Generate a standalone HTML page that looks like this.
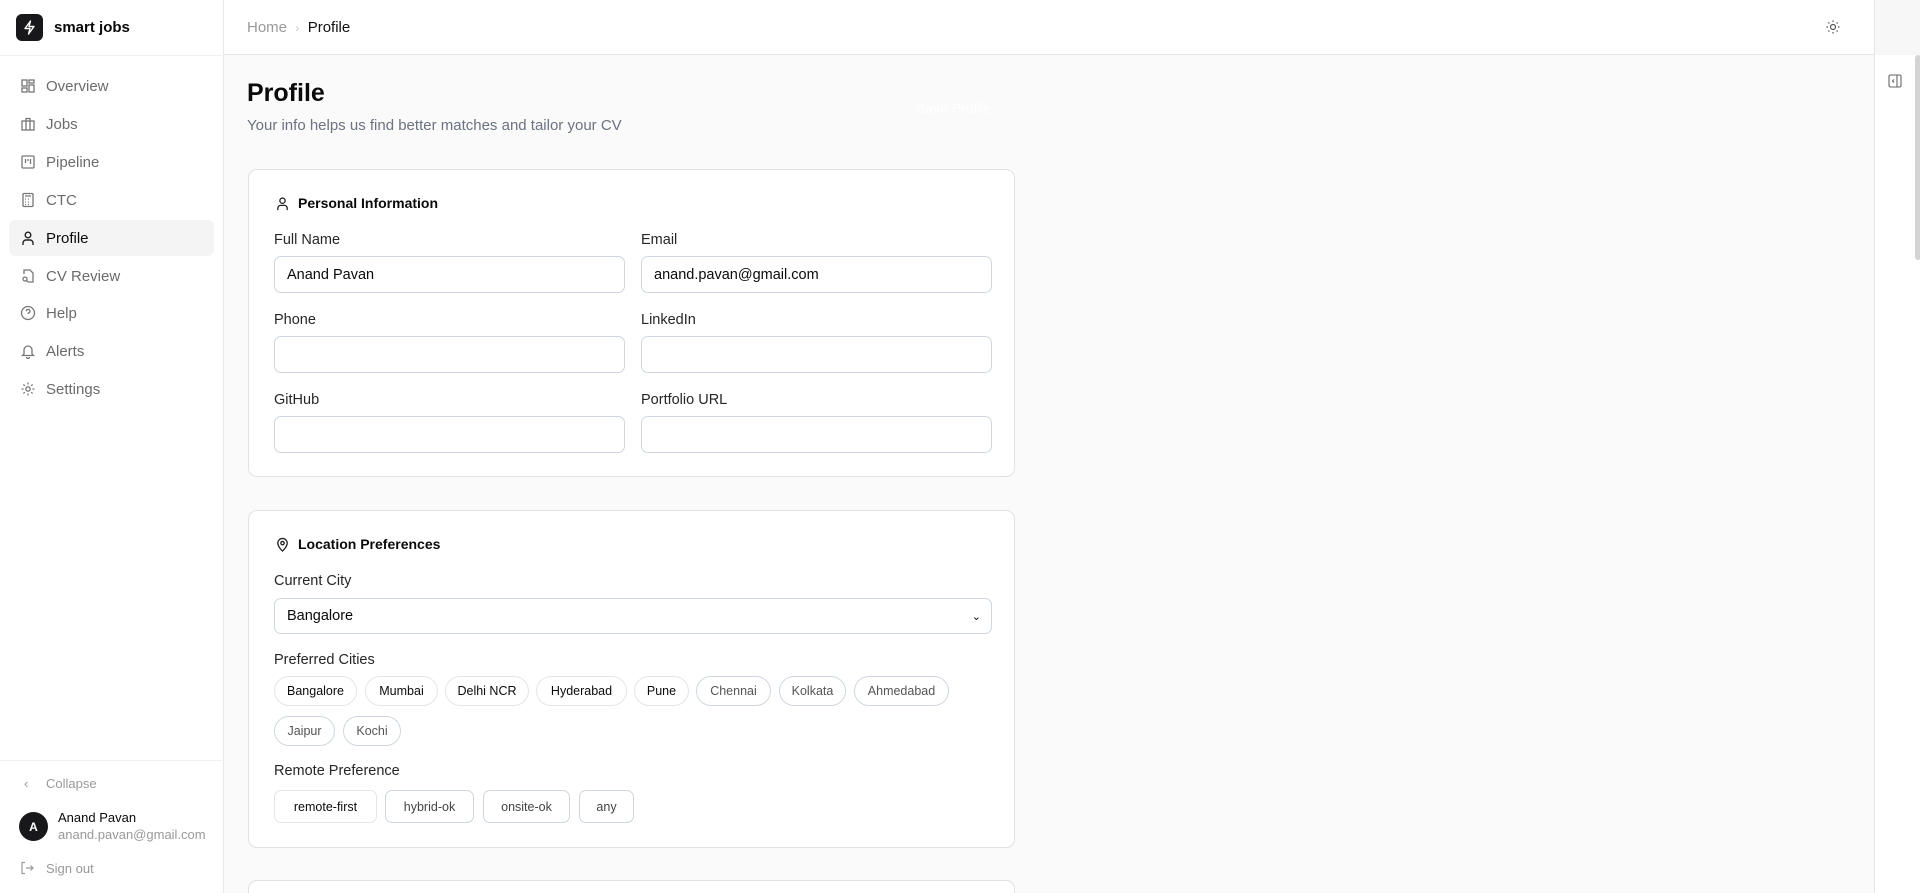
<!DOCTYPE html>
<html style="overflow:hidden;height:893px"><head><meta charset="utf-8"><style>
*{box-sizing:border-box;margin:0;padding:0}
html,body{width:1920px;height:893px;overflow:hidden}
body{font-family:"Liberation Sans",sans-serif;background:#fafafa;color:#0a0a0a;position:relative}
.sb{position:absolute;left:0;top:0;width:224px;height:893px;background:#fff;border-right:1px solid #e8e8e8}
.logo{position:absolute;left:16px;top:14px;width:27px;height:27px;border-radius:6px;background:#18181b}
.brand{position:absolute;left:54px;top:19px;font-size:15px;font-weight:bold}
.sbline{position:absolute;left:0;width:224px;height:1px;background:#f0f0f0}
.nav{position:absolute;left:9px;width:205px;height:36px;border-radius:6px;display:flex;align-items:center;font-size:15px;color:#6b6b6b}
.nav svg{position:absolute;left:11px}
.nav span{position:absolute;left:37px}
.nav.act{background:#f4f4f5;color:#0a0a0a;font-weight:500}
.hdr{position:absolute;left:224px;top:0;width:1650px;height:55px;background:#fff;border-bottom:1px solid #e5e5e5}
.rp{position:absolute;left:1874px;top:0;width:46px;height:893px;background:#fff;border-left:1px solid #e5e5e5}
.card{position:absolute;left:248px;width:767px;background:#fff;border:1px solid #e2e2e2;border-radius:9px}
.ch{position:absolute;left:26px;font-size:14px;font-weight:bold;display:flex;align-items:center;gap:8px}
.lbl{position:absolute;font-size:14.5px;color:#262626}
.inp{position:absolute;height:37px;border:1px solid #cfd6e0;border-radius:7px;background:#fff;font-size:14.5px;padding:0 12px;display:flex;align-items:center}
.chip{position:absolute;height:30px;border-radius:15px;font-size:12.5px;display:flex;align-items:center;justify-content:center;border:1px solid #cfd6e0;color:#555}
.chip.s{border-color:#e5e5e5;color:#0a0a0a}
.btn{position:absolute;height:33px;border-radius:7px;font-size:12.5px;display:flex;align-items:center;justify-content:center;border:1px solid #cfd6e0;color:#444}
</style></head><body>
<div class="sb">
 <div class="logo"><svg width="27" height="27" viewBox="0 0 27 27"><path d="M14.5 7 9 14.5h5l-1.5 5.5 5.5-7.5h-5z" fill="none" stroke="#fff" stroke-width="1.4" stroke-linejoin="round"/></svg></div>
 <div class="brand">smart jobs</div>
 <div class="sbline" style="top:55px"></div>
 <div class="nav" style="top:68px"><svg width="16" height="16" viewBox="0 0 16 16" fill="none" stroke="#777" stroke-width="1.3"><rect x="2" y="2" width="5" height="6"/><rect x="9" y="2" width="5" height="3"/><rect x="9" y="7" width="5" height="7"/><rect x="2" y="10" width="5" height="4"/></svg><span>Overview</span></div>
 <div class="nav" style="top:106px"><svg width="16" height="16" viewBox="0 0 16 16" fill="none" stroke="#777" stroke-width="1.3"><rect x="2" y="5" width="12" height="9"/><path d="M6 5V2.5h4V5M6 5v9M10 5v9"/></svg><span>Jobs</span></div>
 <div class="nav" style="top:144px"><svg width="16" height="16" viewBox="0 0 16 16" fill="none" stroke="#777" stroke-width="1.3"><rect x="2" y="2" width="12" height="12" rx="1"/><path d="M5.5 5v4M8 5v2M10.5 5v5"/></svg><span>Pipeline</span></div>
 <div class="nav" style="top:182px"><svg width="16" height="16" viewBox="0 0 16 16" fill="none" stroke="#777" stroke-width="1.3"><rect x="3" y="1.5" width="10" height="13" rx="1"/><path d="M5 4h6M5 7h1M8 7h1M5 10h1M8 10h1M5 12.5h1M8 12.5h1"/></svg><span>CTC</span></div>
 <div class="nav act" style="top:220px"><svg width="16" height="16" viewBox="0 0 16 16" fill="none" stroke="#222" stroke-width="1.4"><circle cx="8" cy="5" r="2.8"/><path d="M3 15v-2a3 3 0 0 1 3-3h4a3 3 0 0 1 3 3v2"/></svg><span>Profile</span></div>
 <div class="nav" style="top:258px"><svg width="16" height="16" viewBox="0 0 16 16" fill="none" stroke="#777" stroke-width="1.3"><path d="M4 6V2h6l3 3v9H8"/><circle cx="5" cy="11" r="2"/><path d="M6.5 12.5 8 14"/></svg><span>CV Review</span></div>
 <div class="nav" style="top:295px"><svg width="16" height="16" viewBox="0 0 16 16" fill="none" stroke="#777" stroke-width="1.3"><circle cx="8" cy="8" r="6.5"/><path d="M6.3 6.2a1.8 1.8 0 1 1 2.3 1.7c-.5.2-.6.6-.6 1.1M8 11v.3"/></svg><span>Help</span></div>
 <div class="nav" style="top:333px"><svg width="16" height="16" viewBox="0 0 16 16" fill="none" stroke="#777" stroke-width="1.3"><path d="M4 11V7a4 4 0 0 1 8 0v4l1.5 1.5h-11zM6.5 14a1.5 1.5 0 0 0 3 0"/></svg><span>Alerts</span></div>
 <div class="nav" style="top:371px"><svg width="16" height="16" viewBox="0 0 16 16" fill="none" stroke="#777" stroke-width="1.3"><circle cx="8" cy="8" r="2.2"/><path d="M8 1.5v2M8 12.5v2M1.5 8h2M12.5 8h2M3.4 3.4l1.4 1.4M11.2 11.2l1.4 1.4M3.4 12.6l1.4-1.4M11.2 4.8l1.4-1.4"/></svg><span>Settings</span></div>
 <div class="sbline" style="top:760px"></div>
 <div style="position:absolute;left:24px;top:776px;font-size:13px;color:#999">‹</div>
 <div style="position:absolute;left:46px;top:776px;font-size:13px;color:#999">Collapse</div>
 <div style="position:absolute;left:19px;top:812px;width:29px;height:29px;border-radius:50%;background:#18181b;color:#fff;font-size:12px;font-weight:bold;display:flex;align-items:center;justify-content:center">A</div>
 <div style="position:absolute;left:58px;top:810px;font-size:13px;font-weight:500">Anand Pavan</div>
 <div style="position:absolute;left:58px;top:827px;font-size:13px;color:#999">anand.pavan@gmail.com</div>
 <svg style="position:absolute;left:20px;top:861px" width="14" height="14" viewBox="0 0 14 14" fill="none" stroke="#999" stroke-width="1.2"><path d="M5 1.5H2v11h3M6 7h7M10.5 4.5 13 7l-2.5 2.5"/></svg>
 <div style="position:absolute;left:46px;top:861px;font-size:13px;color:#999">Sign out</div>
</div>
<div class="hdr">
 <div style="position:absolute;left:23px;top:19px;font-size:15px;color:#999">Home&nbsp;&nbsp;<span style="color:#ccc;font-size:12px">›</span>&nbsp;&nbsp;<span style="color:#111">Profile</span></div>
 <svg style="position:absolute;left:1601px;top:19px" width="16" height="16" viewBox="0 0 16 16" fill="none" stroke="#555" stroke-width="1.2"><circle cx="8" cy="8" r="2.5"/><path d="M8 1.5v1.5M8 13v1.5M1.5 8H3M13 8h1.5M3.4 3.4l1 1M11.6 11.6l1 1M3.4 12.6l1-1M11.6 4.4l1-1"/></svg>
</div>
<div class="rp">
 <div style="position:absolute;left:0;top:0;width:46px;height:55px;background:#f7f7f7"></div>
 <svg style="position:absolute;left:13px;top:74px" width="14" height="14" viewBox="0 0 14 14" fill="none" stroke="#666" stroke-width="1.1"><rect x="1" y="1" width="12" height="12" rx="1.5"/><path d="M9 1v12M6 5.5 4.5 7 6 8.5"/></svg>
 <div style="position:absolute;left:40px;top:55px;width:6px;height:205px;background:#d4d4d4;border-radius:3px"></div>
</div>
<div style="position:absolute;left:247px;top:79px;font-size:25px;font-weight:bold">Profile</div>
<div style="position:absolute;left:247px;top:117px;font-size:15px;color:#6b7280">Your info helps us find better matches and tailor your CV</div>
<div style="position:absolute;left:916px;top:100px;font-size:14px;color:#fff">Save Profile</div>

<div class="card" style="top:169px;height:308px">
 <div class="ch" style="top:25px"><svg width="15" height="15" viewBox="0 0 16 16" fill="none" stroke="#222" stroke-width="1.4"><circle cx="8" cy="5" r="2.8"/><path d="M3 15v-2a3 3 0 0 1 3-3h4a3 3 0 0 1 3 3v2"/></svg>Personal Information</div>
 <div class="lbl" style="left:25px;top:62px">Full Name</div><div class="lbl" style="left:392px;top:62px">Email</div>
 <div class="inp" style="left:25px;top:86px;width:351px">Anand Pavan</div>
 <div class="inp" style="left:392px;top:86px;width:351px">anand.pavan@gmail.com</div>
 <div class="lbl" style="left:25px;top:142px">Phone</div><div class="lbl" style="left:392px;top:142px">LinkedIn</div>
 <div class="inp" style="left:25px;top:166px;width:351px"></div>
 <div class="inp" style="left:392px;top:166px;width:351px"></div>
 <div class="lbl" style="left:25px;top:222px">GitHub</div><div class="lbl" style="left:392px;top:222px">Portfolio URL</div>
 <div class="inp" style="left:25px;top:246px;width:351px"></div>
 <div class="inp" style="left:392px;top:246px;width:351px"></div>
</div>

<div class="card" style="top:510px;height:338px">
 <div class="ch" style="top:25px"><svg width="15" height="15" viewBox="0 0 16 16" fill="none" stroke="#222" stroke-width="1.4"><path d="M8 15s5-4.5 5-8.5a5 5 0 0 0-10 0C3 10.5 8 15 8 15z"/><circle cx="8" cy="6.5" r="1.8"/></svg>Location Preferences</div>
 <div class="lbl" style="left:25px;top:62px">Current City</div>
 <div class="inp" style="left:25px;top:87px;width:718px;height:36px">Bangalore<span style="position:absolute;right:10px;font-size:11px">&#8964;</span></div>
 <div class="lbl" style="left:25px;top:141px">Preferred Cities</div>
 <div class="chip s" style="left:25px;top:165px;width:83px">Bangalore</div>
 <div class="chip s" style="left:116px;top:165px;width:73px">Mumbai</div>
 <div class="chip s" style="left:196px;top:165px;width:84px">Delhi NCR</div>
 <div class="chip s" style="left:287px;top:165px;width:91px">Hyderabad</div>
 <div class="chip s" style="left:385px;top:165px;width:55px">Pune</div>
 <div class="chip" style="left:447px;top:165px;width:75px">Chennai</div>
 <div class="chip" style="left:530px;top:165px;width:67px">Kolkata</div>
 <div class="chip" style="left:605px;top:165px;width:95px">Ahmedabad</div>
 <div class="chip" style="left:25px;top:205px;width:61px">Jaipur</div>
 <div class="chip" style="left:94px;top:205px;width:58px">Kochi</div>
 <div class="lbl" style="left:25px;top:252px">Remote Preference</div>
 <div class="btn" style="left:25px;top:279px;width:103px;color:#0a0a0a;font-weight:500;border-color:#e5e5e5">remote-first</div>
 <div class="btn" style="left:136px;top:279px;width:89px">hybrid-ok</div>
 <div class="btn" style="left:234px;top:279px;width:87px">onsite-ok</div>
 <div class="btn" style="left:330px;top:279px;width:55px">any</div>
</div>
<div style="position:absolute;left:248px;top:880px;width:767px;height:13px;background:#fff;border:1px solid #e2e2e2;border-bottom:none;border-radius:9px 9px 0 0"></div>
</body></html>
